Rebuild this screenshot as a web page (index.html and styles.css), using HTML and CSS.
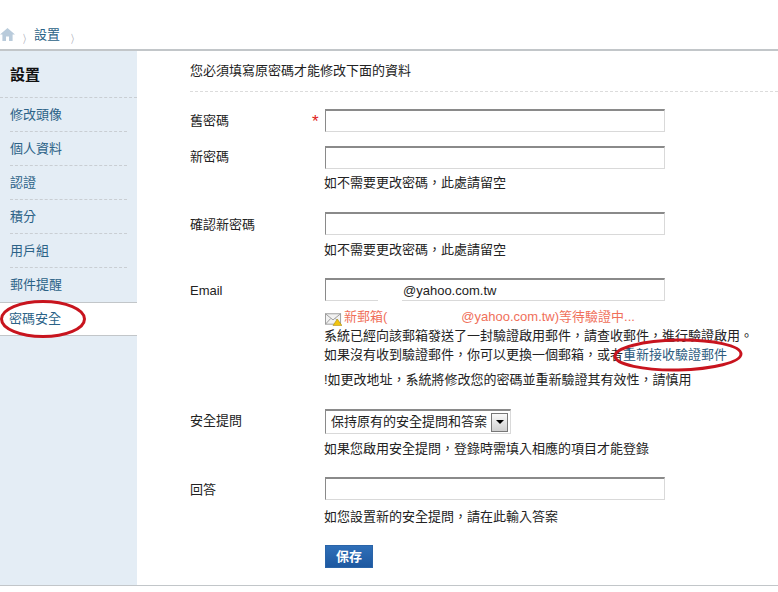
FILE: index.html
```html
<!DOCTYPE html>
<html lang="zh-Hant">
<head>
<meta charset="utf-8">
<title>設置</title>
<link rel="stylesheet" href="styles.css">
</head>
<body>
<div class="page">
  <nav class="crumbs">
    <svg class="home" width="15" height="13" viewBox="0 0 15 13"><path d="M7.5 0 L15 6.5 H12.6 V13 H9 V8.5 H6 V13 H2.4 V6.5 H0 Z" fill="#b9cbdb"/></svg>
    <span class="sep">&#x3009;</span>
    <a class="crumb">設置</a>
    <span class="sep">&#x3009;</span>
  </nav>
  <div class="body">
    <aside class="side">
      <h2 class="side-title">設置</h2>
      <ul class="side-list">
        <li class="side-item">修改頭像</li>
        <li class="side-item">個人資料</li>
        <li class="side-item">認證</li>
        <li class="side-item">積分</li>
        <li class="side-item">用戶組</li>
        <li class="side-item last">郵件提醒</li>
        <li class="side-item active">密碼安全</li>
      </ul>
    </aside>
    <main class="main">
      <p class="intro">您必須填寫原密碼才能修改下面的資料</p>
      <div class="row row-old">
        <label class="lbl">舊密碼</label><span class="star">*</span>
        <div class="field"><input class="txt" type="text"></div>
      </div>
      <div class="row row-new">
        <label class="lbl">新密碼</label>
        <div class="field"><input class="txt" type="text"><p class="hint">如不需要更改密碼，此處請留空</p></div>
      </div>
      <div class="row row-confirm">
        <label class="lbl">確認新密碼</label>
        <div class="field"><input class="txt" type="text"><p class="hint">如不需要更改密碼，此處請留空</p></div>
      </div>
      <div class="row row-email">
        <label class="lbl lbl-en">Email</label>
        <div class="field">
          <div class="txt email-box"><span class="mask"></span>@yahoo.com.tw</div>
          <p class="pending">
            <svg class="mail" width="17" height="15" viewBox="0 0 18 15"><rect x="0.5" y="2.5" width="16" height="11" fill="#f2f2f2" stroke="#9a9a9a"/><path d="M0.5 2.5 L8.5 9 L16.5 2.5 M0.5 13.5 L6 7.5 M16.5 13.5 L11 7.5" fill="none" stroke="#9a9a9a"/><path d="M13 8 L18 15 H8.5 Z" fill="#f1c40f" stroke="#a98a10" stroke-width=".6"/></svg>
            <span>新郵箱(</span><span class="gap"></span><span>@yahoo.com.tw)等待驗證中...</span>
          </p>
          <p class="line">系統已經向該郵箱發送了一封驗證啟用郵件，請查收郵件，進行驗證啟用。</p>
          <p class="line">如果沒有收到驗證郵件，你可以更換一個郵箱，或者<a class="link">重新接收驗證郵件</a></p>
          <p class="line warn">!如更改地址，系統將修改您的密碼並重新驗證其有效性，請慎用</p>
        </div>
      </div>
      <div class="row row-q">
        <label class="lbl">安全提問</label>
        <div class="field">
          <div class="select"><span>保持原有的安全提問和答案</span><span class="arrow"><i></i></span></div>
          <p class="hint">如果您啟用安全提問，登錄時需填入相應的項目才能登錄</p>
        </div>
      </div>
      <div class="row row-a">
        <label class="lbl">回答</label>
        <div class="field"><input class="txt" type="text"><p class="hint hint-a">如您設置新的安全提問，請在此輸入答案</p></div>
      </div>
      <div class="row row-btn">
        <span class="lbl"></span>
        <div class="field"><button class="save" type="button">保存</button></div>
      </div>
    </main>
  </div>
  <svg class="marks" width="778" height="592" viewBox="0 0 778 592">
    <ellipse cx="43" cy="319" rx="41.5" ry="17.5" fill="none" stroke="#c8141e" stroke-width="3"/>
    <ellipse cx="678" cy="355" rx="63" ry="15" fill="none" stroke="#c8141e" stroke-width="3" transform="rotate(-1 678 355)"/>
  </svg>
</div>
</body>
</html>
```
FILE: styles.css
```css
* { box-sizing: border-box; }
html, body { margin: 0; padding: 0; background: #fff; }
body { font: 13px/18px "Liberation Sans", "Noto Sans CJK TC", sans-serif; color: #222; }
p, h2, ul { margin: 0; padding: 0; }
.page { position: relative; width: 778px; height: 592px; overflow: hidden; }
.crumbs { height: 51px; border-bottom: 2px solid #c2c6c9; display: flex; align-items: flex-start; padding-top: 27px; }
.home { margin-top: 1px; }
.sep { color: #99a; font-size: 11px; width: 19px; line-height: 18px; margin-top: 3px; text-align: left; padding-left: 7px; transform: scaleX(.6); }
.crumb { color: #2b6287; font-size: 13px; line-height: 16px; width: 29px; }
.body { display: flex; height: 535px; border-bottom: 1px solid #c2c6c9; }
.side { width: 137px; background: #e4edf5; flex: none; }
.side-title { font-size: 15px; line-height: 20px; font-weight: bold; color: #111; padding: 14px 10px 11px; border-bottom: 1px dashed #c9ced3; height: 47px; }
.side-list { list-style: none; }
.side-item { height: 34px; margin: 0 10px; border-bottom: 1px dashed #c9ced3; color: #2b6287; line-height: 34px; }
.side-item.last { border-bottom: 0; height: 34px; }
.side-item.active { margin: 0; padding-left: 9px; height: 34px; background: #fff; border-top: 1px solid #c2c6c9; border-bottom: 1px solid #c2c6c9; line-height: 32px; }
.main { flex: 1; padding: 11px 0 0 53px; }
.intro { color: #222; height: 30px; width: 588px; border-bottom: 1px dashed #dcdcdc; line-height: 18px; }
.row { display: flex; position: relative; }
.lbl { width: 135px; flex: none; color: #222; line-height: 18px; padding-top: 1px; }
.star { position: absolute; left: 122px; top: 4px; color: #e02020; font-size: 17px; line-height: 18px; }
.field { width: 420px; }
.txt { display: block; width: 340px; height: 23px; padding: 0 6px; font: inherit; color: #222; background: #fff; border: 1px solid #d9d9d9; border-top: 2px solid #8a8a8a; border-left: 1px solid #8a8a8a; outline: 0; border-radius: 0; }
.hint { color: #222; line-height: 18px; margin: 5px 0 0 -1px; }
.row-q .hint { margin-top: 6px; }
.hint-a { margin-top: 8px; }
.row-old { margin-top: 17px; }
.row-old .lbl { padding-top: 3px; }
.row-new { margin-top: 14px; }
.row-new .lbl { padding-top: 2px; }
.row-confirm { margin-top: 20px; }
.row-confirm .lbl { padding-top: 4px; }
.row-confirm .hint { margin-top: 6px; }
.row-email { margin-top: 19px; }
.row-email .lbl { padding-top: 4px; }
.email-box { line-height: 21px; padding: 0; display: flex; color: #222; position: relative; }
.mask { width: 77px; flex: none; }
.email-box::after { content: ""; position: absolute; left: 52px; bottom: -1px; width: 24px; height: 1px; background: #fff; }
.pending { color: #f0705a; display: flex; align-items: center; margin-top: 6px; height: 19px; }
.mail { margin-right: 2px; margin-top: 3px; }
.gap { width: 74px; flex: none; }
.line { color: #222; line-height: 19px; margin-top: 0; margin-left: -1px; white-space: nowrap; }
.warn { margin-top: 6px; }
.link { color: #2b5a7d; }
.row-q { margin-top: 20px; }
.row-q .lbl { padding-top: 3px; }
.select { width: 186px; height: 25px; border: 1px solid #d9d9d9; border-top: 2px solid #8a8a8a; border-left: 1px solid #8a8a8a; display: flex; align-items: center; justify-content: space-between; padding: 0 2px 0 5px; color: #222; }
.arrow { width: 17px; height: 19px; border: 1px solid #777; background: linear-gradient(#fafafa, #cfcfcf); display: flex; align-items: center; justify-content: center; }
.arrow i { border: 4px solid transparent; border-top: 4px solid #000; border-bottom: 0; }
.row-a { margin-top: 19px; }
.row-a .lbl { padding-top: 4px; }
.row-btn { margin-top: 19px; }
.save { display: block; width: 48px; height: 23px; padding: 0; font: bold 13px/21px "Liberation Sans", "Noto Sans CJK TC", sans-serif; color: #fff; background: linear-gradient(#2f6fb8, #1d58a0); border: 1px solid #2a64a8; border-radius: 0; }
.marks { position: absolute; left: 0; top: 0; pointer-events: none; }
```
